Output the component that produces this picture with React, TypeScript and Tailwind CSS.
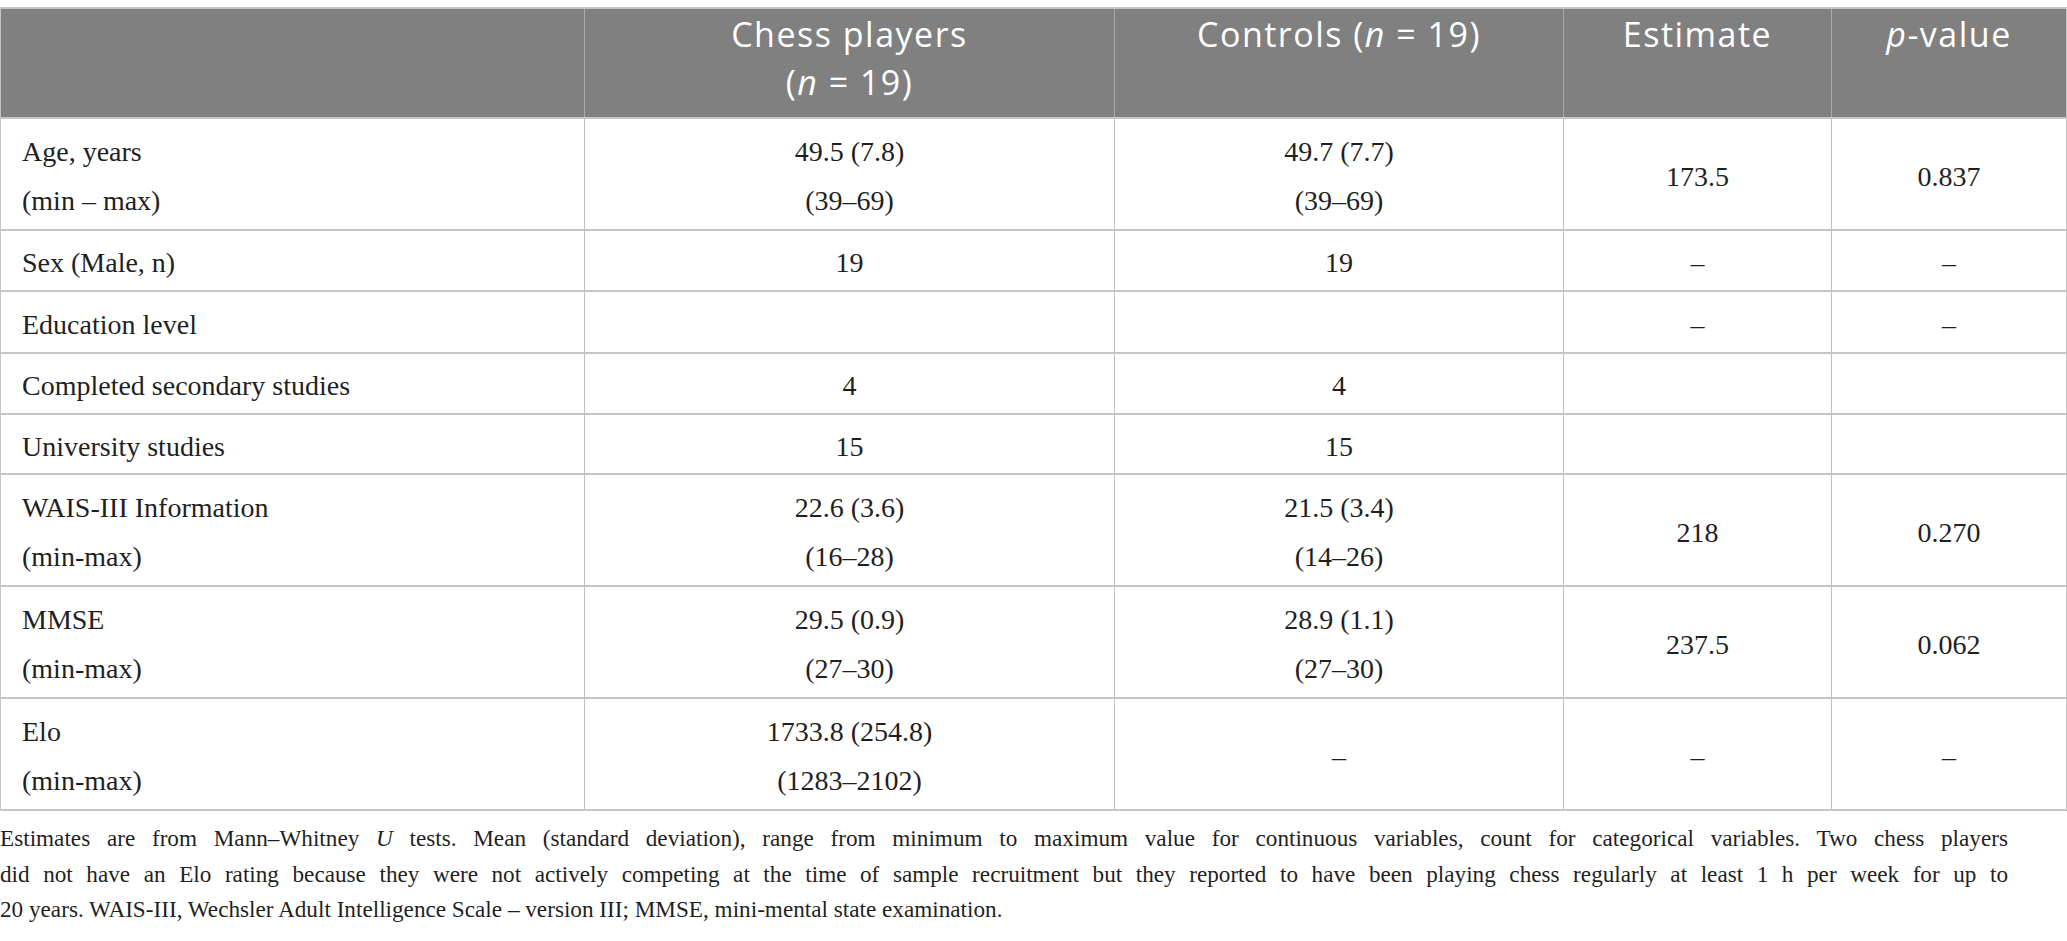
import React from "react";

type RowData = {
  h: string;
  label: string[];
  chess: string[];
  controls: string[];
  estimate: string;
  p: string;
};

const grid = "grid grid-cols-[584px_530px_449px_268px_1fr]";

const rows: RowData[] = [
  { h: "h-[112px]", label: ["Age, years", "(min – max)"], chess: ["49.5 (7.8)", "(39–69)"], controls: ["49.7 (7.7)", "(39–69)"], estimate: "173.5", p: "0.837" },
  { h: "h-[61px]", label: ["Sex (Male, n)"], chess: ["19"], controls: ["19"], estimate: "–", p: "–" },
  { h: "h-[62px]", label: ["Education level"], chess: [], controls: [], estimate: "–", p: "–" },
  { h: "h-[61px]", label: ["Completed secondary studies"], chess: ["4"], controls: ["4"], estimate: "", p: "" },
  { h: "h-[60px]", label: ["University studies"], chess: ["15"], controls: ["15"], estimate: "", p: "" },
  { h: "h-[112px]", label: ["WAIS-III Information", "(min-max)"], chess: ["22.6 (3.6)", "(16–28)"], controls: ["21.5 (3.4)", "(14–26)"], estimate: "218", p: "0.270" },
  { h: "h-[112px]", label: ["MMSE", "(min-max)"], chess: ["29.5 (0.9)", "(27–30)"], controls: ["28.9 (1.1)", "(27–30)"], estimate: "237.5", p: "0.062" },
  { h: "h-[112px]", label: ["Elo", "(min-max)"], chess: ["1733.8 (254.8)", "(1283–2102)"], controls: ["–"], estimate: "–", p: "–" },
];

function Cell({ lines, left, last }: { lines: string[]; left?: boolean; last?: boolean }) {
  return (
    <div
      className={`flex flex-col justify-center pt-[4px] leading-[49px] border-[#bdbdbd] ${
        last ? "" : "border-r"
      } ${left ? "pl-[21px] items-start" : "items-center text-center"}`}
    >
      {lines.map((l, i) => (
        <div key={i} className="whitespace-nowrap">
          {l}
        </div>
      ))}
    </div>
  );
}

function HeadCell({ children, last }: { children?: React.ReactNode; last?: boolean }) {
  return (
    <div className={`pt-[1px] text-center leading-[48px] border-[#a9a9a9] ${last ? "" : "border-r"}`}>
      {children}
    </div>
  );
}

export default function App() {
  return (
    <div className="bg-white w-[2067px] pt-[7px] font-['Liberation_Serif',serif] text-[#1f1f1f]">
      <div className="border-t-2 border-x border-[#c4c4c4]">
        <div
          className={`${grid} h-[110px] bg-[#7f807f] text-white border-b-2 border-[#c6c6c6] font-['Open_Sans',sans-serif] text-[34px] tracking-[1.5px]`}
        >
          <HeadCell />
          <HeadCell>
            <div>Chess players</div>
            <div>
              (<i>n</i> = 19)
            </div>
          </HeadCell>
          <HeadCell>
            Controls (<i>n</i> = 19)
          </HeadCell>
          <HeadCell>Estimate</HeadCell>
          <HeadCell last>
            <i>p</i>-value
          </HeadCell>
        </div>
        {rows.map((r, i) => (
          <div key={i} className={`${grid} ${r.h} border-b-2 border-[#c6c6c6] text-[28px]`}>
            <Cell lines={r.label} left />
            <Cell lines={r.chess} />
            <Cell lines={r.controls} />
            <Cell lines={r.estimate ? [r.estimate] : []} />
            <Cell lines={r.p ? [r.p] : []} last />
          </div>
        ))}
      </div>
      <div className="mt-[10px] w-[2008px] text-[23.2px] leading-[35.5px]">
        <div className="text-justify [text-align-last:justify]">
          Estimates are from Mann–Whitney <i>U</i> tests. Mean (standard deviation), range from minimum to maximum value for
          continuous variables, count for categorical variables. Two chess players
        </div>
        <div className="text-justify [text-align-last:justify]">
          did not have an Elo rating because they were not actively competing at the time of sample recruitment but they
          reported to have been playing chess regularly at least 1 h per week for up to
        </div>
        <div>20 years. WAIS-III, Wechsler Adult Intelligence Scale – version III; MMSE, mini-mental state examination.</div>
      </div>
    </div>
  );
}
